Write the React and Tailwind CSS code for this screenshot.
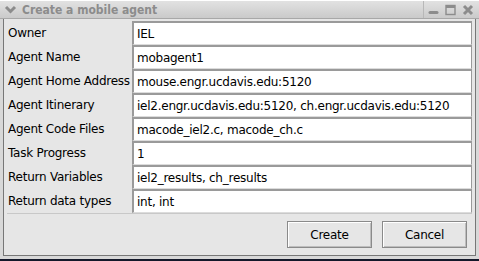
import React from "react";

const rows = [
  ["Owner", "IEL"],
  ["Agent Name", "mobagent1"],
  ["Agent Home Address", "mouse.engr.ucdavis.edu:5120"],
  ["Agent Itinerary", "iel2.engr.ucdavis.edu:5120, ch.engr.ucdavis.edu:5120"],
  ["Agent Code Files", "macode_iel2.c, macode_ch.c"],
  ["Task Progress", "1"],
  ["Return Variables", "iel2_results, ch_results"],
  ["Return data types", "int, int"],
];

function TitleBar() {
  return (
    <div className="flex h-[19px] items-center border-t border-white bg-gradient-to-b from-[#e2e2e2] to-[#cacaca] border-b border-b-[#a8a8a8]">
      {/* chevron */}
      <svg width="13" height="10" viewBox="0 0 13 10" className="ml-[4px] mr-[5px]">
        <path d="M2 2 L6.5 6.5 L11 2" stroke="#8c8c8c" strokeWidth="3" fill="none" />
      </svg>
      <span className="text-[12px] font-bold text-[#8c8c8c] leading-none font-['DejaVu_Sans_Condensed','DejaVu_Sans',sans-serif]">
        Create a mobile agent
      </span>
      <div className="ml-auto flex h-full items-center border-l border-[#b8b8b8] pl-[4px] pr-[5px] gap-[6px]">
        <svg width="11" height="12" viewBox="0 0 11 12">
          <rect x="0.5" y="7" width="10" height="3" rx="1.5" fill="#8c8c8c" />
        </svg>
        <svg width="11" height="12" viewBox="0 0 11 12">
          <rect x="1" y="1.5" width="9" height="9" fill="none" stroke="#8c8c8c" strokeWidth="1.4" />
          <rect x="1" y="1" width="9" height="3" fill="#8c8c8c" />
        </svg>
        <svg width="12" height="12" viewBox="0 0 12 12">
          <path d="M2 2 L10 10 M10 2 L2 10" stroke="#8c8c8c" strokeWidth="3" />
        </svg>
      </div>
    </div>
  );
}

function Btn({ children }) {
  return (
    <button className="h-[27px] w-[85px] border border-[#8a8a8a] bg-[#e6e6e6] shadow-[inset_1px_1px_0_#ffffff,inset_-1px_-1px_0_#bdbdbd] text-[12px] tracking-[-0.25px] text-black">
      {children}
    </button>
  );
}

export default function App() {
  return (
    <div className="w-[479px] h-[261px] bg-[#14182a] font-['DejaVu_Sans',sans-serif]">
      <div className="w-[479px] h-[259px] bg-[#d8d8d8] flex flex-col">
        <TitleBar />
        <div className="flex-1 mx-[3px] mb-[3px] border-l border-r border-b border-[#777] bg-[#e6e6e6] flex flex-col">
          <div className="pr-[3px] pt-[2px]">
            {rows.map(([label, value]) => (
              <div key={label} className="flex h-[24px]">
                <div className="w-[128px] flex items-center pl-[4px] text-[12px] tracking-[-0.25px] text-black whitespace-nowrap">
                  {label}
                </div>
                <div className="flex-1 flex items-center bg-white border-t-2 border-l-2 border-[#9a9a9a] border-b border-r border-b-[#dcdcdc] border-r-[#9a9a9a] pl-[3px] text-[12px] tracking-[-0.25px] text-black whitespace-nowrap overflow-hidden">
                  {value}
                </div>
              </div>
            ))}
          </div>
          <div className="mx-[3px] border-t border-[#c8c8c8]" />
          <div className="flex justify-end gap-[10px] pr-[8px] pt-[7px]">
            <Btn>Create</Btn>
            <Btn>Cancel</Btn>
          </div>
        </div>
      </div>
    </div>
  );
}
